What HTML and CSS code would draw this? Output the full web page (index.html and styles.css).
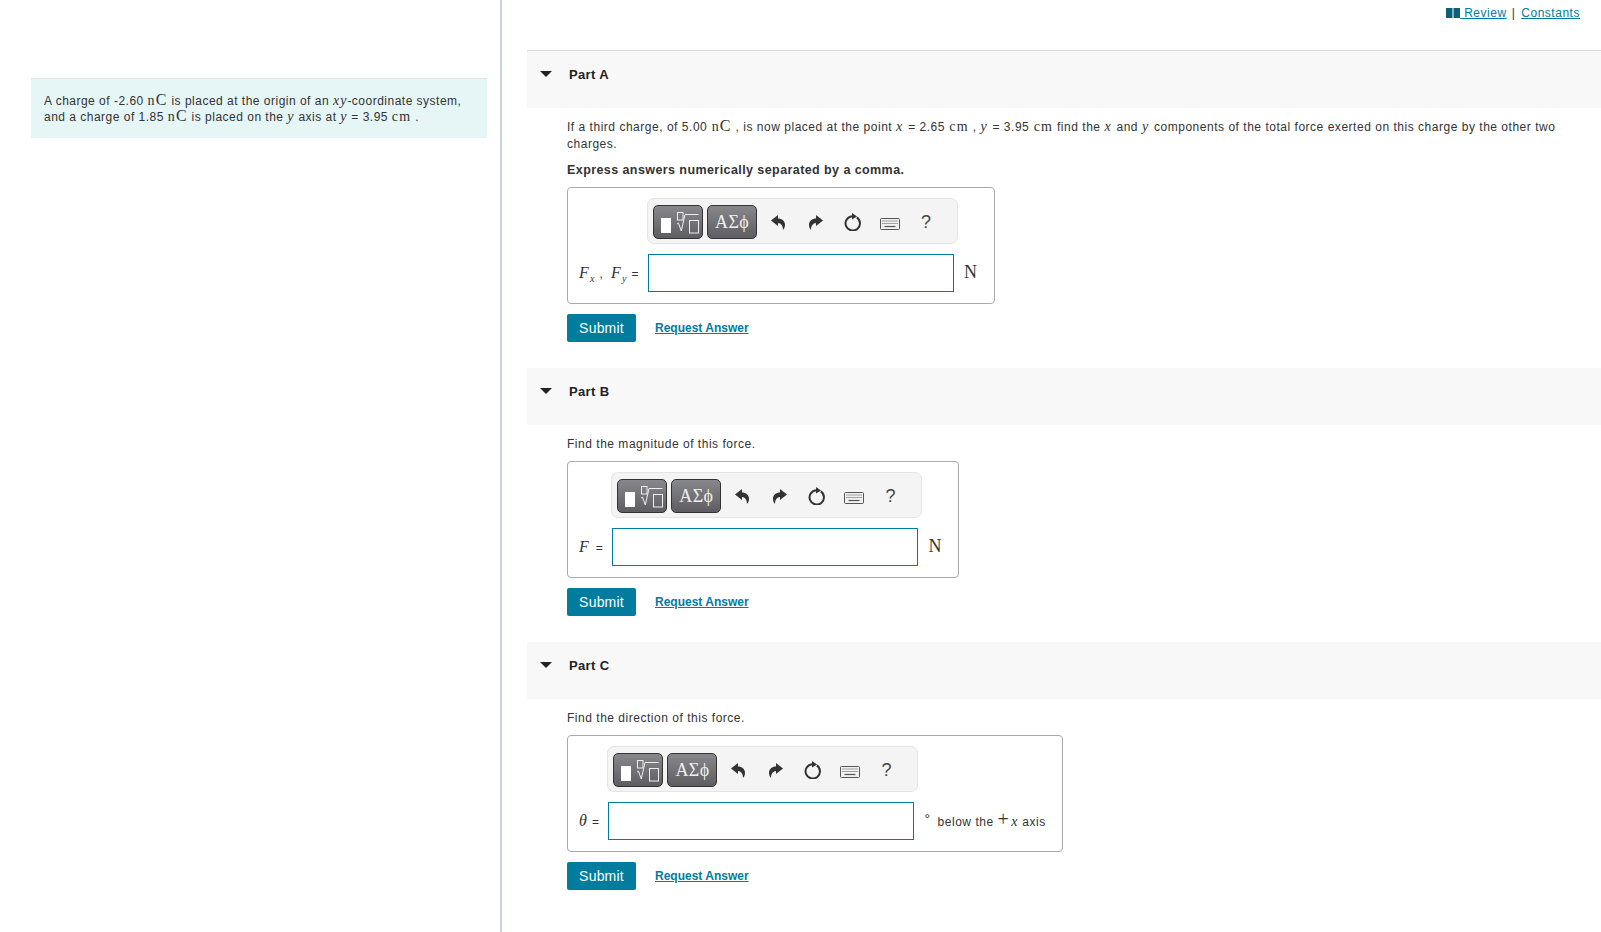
FILE: index.html
```html
<!DOCTYPE html>
<html lang="en">
<head>
<meta charset="utf-8">
<title>Part A</title>
<link rel="stylesheet" href="styles.css">
</head>
<body>
<svg class="defs" width="0" height="0" aria-hidden="true">
  <symbol id="i-template" viewBox="0 0 48 32">
    <rect x="7" y="12" width="10" height="15" fill="#fff"/>
    <rect x="23.500" y="6.500" width="5.500" height="7.500" fill="none" stroke="#eee" stroke-width="1"/>
    <path d="M23 18l1.500-.8L27.300 25 31 8.500H44.500" fill="none" stroke="#eee" stroke-width="1"/>
    <rect x="35.500" y="14.500" width="9" height="12.500" fill="none" stroke="#eee" stroke-width="1"/>
  </symbol>
  <symbol id="i-undo" viewBox="0 0 14 15">
    <path d="M0 5.500L7 0V3.500C11 3.500 14 6 14 10C14 12 13 14 12 15C12 11 10 8 7 8V11Z" fill="#333"/>
  </symbol>
  <symbol id="i-redo" viewBox="0 0 14 15">
    <path d="M14 5.500L7 0V3.500C3 3.500 0 6 0 10C0 12 1 14 2 15C2 11 4 8 7 8V11Z" fill="#333"/>
  </symbol>
  <symbol id="i-reset" viewBox="0 0 18 18">
    <path d="M12.800 4.400A7.200 7.200 0 1 1 8 3.200" fill="none" stroke="#333" stroke-width="2"/>
    <path d="M8 0L13 3.500L8 6.500Z" fill="#333"/>
  </symbol>
  <symbol id="i-keys" viewBox="0 0 20 12">
    <rect x=".5" y=".5" width="19" height="11" rx="1" fill="#f1f1f1" stroke="#555"/>
    <path d="M2.500 3H17.500M2.500 5.500H17.500" stroke="#555" stroke-width="1.200" stroke-dasharray="1 1"/>
    <path d="M4.500 8.500H15.500" stroke="#555" stroke-width="1.200"/>
  </symbol>
  <symbol id="i-book" viewBox="0 0 14 10">
    <path d="M0 0H6.500V10H0ZM7.500 0H14V10H7.500Z" fill="#0c6078"/>
  </symbol>
</svg>

<div class="page">
  <aside class="sidebar">
    <div class="intro">
      A charge of -2.60 <span class="unit">n<span class="big">C</span></span> is placed at the origin of an <i class="var">xy</i>-coordinate system,<br>
      and a charge of 1.85 <span class="unit">n<span class="big">C</span></span> is placed on the <i class="var">y</i> axis at <i class="var">y</i> = 3.95 <span class="unit">cm</span> .
    </div>
  </aside>

  <main class="content">
    <div class="toplinks">
      <svg class="book"><use href="#i-book"/></svg><a href="#" class="link">&nbsp;Review</a><span class="sep">|</span><a href="#" class="link">Constants</a>
    </div>

    <section class="part part-first">
      <header class="part-head"><span class="caret"></span><h2 class="part-title">Part A</h2></header>
      <div class="part-body">
        <p class="prompt">If a third charge, of 5.00 <span class="unit">n<span class="big">C</span></span> , is now placed at the point <i class="var">x</i> = 2.65 <span class="unit">cm</span> , <i class="var">y</i> = 3.95 <span class="unit">cm</span> find the <i class="var">x</i> and <i class="var">y</i> components of the total force exerted on this charge by the other two charges.</p>
        <p class="prompt prompt-strong">Express answers numerically separated by a comma.</p>
        <div class="answer">
          <div class="toolbar">
            <button class="tool-btn"><svg class="tmpl"><use href="#i-template"/></svg></button>
            <button class="tool-btn tool-greek">ΑΣϕ</button>
            <svg class="ic ic-undo"><use href="#i-undo"/></svg>
            <svg class="ic ic-redo"><use href="#i-redo"/></svg>
            <svg class="ic ic-reset"><use href="#i-reset"/></svg>
            <svg class="ic ic-keys"><use href="#i-keys"/></svg>
            <span class="ic-help">?</span>
          </div>
          <label class="ans-label"><i class="var">F<sub>x</sub></i> , &nbsp;<i class="var">F<sub>y</sub></i> =</label>
          <div class="ans-input"></div>
          <span class="ans-unit"><span class="unit-n">N</span></span>
        </div>
        <div class="actions"><button class="submit">Submit</button><a href="#" class="request">Request Answer</a></div>
      </div>
    </section>

    <section class="part">
      <header class="part-head"><span class="caret"></span><h2 class="part-title">Part B</h2></header>
      <div class="part-body">
        <p class="prompt">Find the magnitude of this force.</p>
        <div class="answer">
          <div class="toolbar">
            <button class="tool-btn"><svg class="tmpl"><use href="#i-template"/></svg></button>
            <button class="tool-btn tool-greek">ΑΣϕ</button>
            <svg class="ic ic-undo"><use href="#i-undo"/></svg>
            <svg class="ic ic-redo"><use href="#i-redo"/></svg>
            <svg class="ic ic-reset"><use href="#i-reset"/></svg>
            <svg class="ic ic-keys"><use href="#i-keys"/></svg>
            <span class="ic-help">?</span>
          </div>
          <label class="ans-label"><i class="var var-wide">F</i> =</label>
          <div class="ans-input"></div>
          <span class="ans-unit"><span class="unit-n">N</span></span>
        </div>
        <div class="actions"><button class="submit">Submit</button><a href="#" class="request">Request Answer</a></div>
      </div>
    </section>

    <section class="part">
      <header class="part-head"><span class="caret"></span><h2 class="part-title">Part C</h2></header>
      <div class="part-body">
        <p class="prompt">Find the direction of this force.</p>
        <div class="answer">
          <div class="toolbar">
            <button class="tool-btn"><svg class="tmpl"><use href="#i-template"/></svg></button>
            <button class="tool-btn tool-greek">ΑΣϕ</button>
            <svg class="ic ic-undo"><use href="#i-undo"/></svg>
            <svg class="ic ic-redo"><use href="#i-redo"/></svg>
            <svg class="ic ic-reset"><use href="#i-reset"/></svg>
            <svg class="ic ic-keys"><use href="#i-keys"/></svg>
            <span class="ic-help">?</span>
          </div>
          <label class="ans-label"><i class="var">θ</i> =</label>
          <div class="ans-input"></div>
          <span class="ans-unit"><span class="deg">°</span>below the <span class="plus">+</span><i class="var">x</i> axis</span>
        </div>
        <div class="actions"><button class="submit">Submit</button><a href="#" class="request">Request Answer</a></div>
      </div>
    </section>
  </main>
</div>
</body>
</html>
```
FILE: styles.css
```css
* { box-sizing: border-box; }
html, body { margin: 0; padding: 0; background: #fff; }
body {
  font-family: "Liberation Sans", Arial, sans-serif;
  font-size: 12px;
  letter-spacing: .52px;
  color: #333;
  overflow: hidden;
}
.defs { position: absolute; }

.page { display: flex; min-height: 932px; }

.sidebar {
  width: 502px;
  flex: none;
  padding: 78px 13px 0 31px;
  border-right: 2px solid #c3d5e6;
}
.intro {
  background: #e6f5f6;
  border-top: 1px solid #dbe8ea;
  padding: 14px 13px 13px;
  line-height: 16px;
  letter-spacing: .49px;
  white-space: nowrap;
}

.unit {
  font-family: "Liberation Serif", "DejaVu Serif", serif;
  font-size: 14px;
  letter-spacing: 1.200px;
  line-height: 0;
}
.big { font-size: 16px; }
.unit-n {
  font-family: "Liberation Serif", "DejaVu Serif", serif;
  font-size: 18px;
  line-height: 0;
}
.var {
  font-family: "Liberation Serif", "DejaVu Serif", serif;
  font-style: italic;
  font-size: 14px;
  letter-spacing: 1px;
  line-height: 0;
}
.var sub { font-size: 10px; line-height: 0; }
.ans-label .var { font-size: 16px; letter-spacing: 1.200px; }
.ans-label .var-wide { margin-right: 2px; }
.prompt .var { margin-right: 1px; }
.prompt .unit { margin-left: .5px; }

.content { flex: 1; min-width: 0; padding-left: 25px; }

.toplinks {
  height: 50px;
  display: flex;
  justify-content: flex-end;
  align-items: flex-start;
  padding: 5px 21px 0 0;
  line-height: 16px;
}
.book { width: 14px; height: 10px; margin-top: 3px; }
.link { color: #007c9e; text-decoration: underline; }
.sep { margin: 0 6px 0 5px; }

.part { margin-bottom: 26px; }
.part-head {
  height: 57px;
  background: #f8f8f8;
  display: flex;
  align-items: flex-start;
  padding: 16px 0 0 13px;
}
.part-first .part-head { height: 58px; border-top: 1px solid #ddd; }
.caret {
  width: 0;
  height: 0;
  margin-top: 4px;
  border-left: 6px solid transparent;
  border-right: 6px solid transparent;
  border-top: 6px solid #222;
}
.part-title {
  margin: 0 0 0 17px;
  font-size: 13px;
  line-height: 16px;
  font-weight: 700;
  letter-spacing: .35px;
  color: #222;
}

.part-body { padding: 11px 0 0 40px; }

.prompt { margin: 0 0 9px; line-height: 17px; padding-right: 45px; }
.prompt:last-of-type { margin-bottom: 8px; }
.prompt-strong { font-weight: 700; font-size: 12.500px; letter-spacing: .42px; }

.answer {
  display: inline-grid;
  grid-template-columns: auto 306px auto;
  grid-template-rows: 46px 38px;
  column-gap: 9px;
  row-gap: 10px;
  align-items: center;
  height: 117px;
  padding: 10px 16px 11px 11px;
  border: 1px solid #aaa;
  border-radius: 4px;
  vertical-align: top;
}
.toolbar {
  grid-column: 2 / 4;
  grid-row: 1;
  width: 311px;
  height: 46px;
  margin-left: -1px;
  display: flex;
  align-items: center;
  padding: 2px 0 0 5px;
  background: #f4f4f4;
  border: 1px solid #e4e4e4;
  border-radius: 7px;
}
.tool-btn {
  width: 50px;
  height: 34px;
  margin: 0 4px 0 0;
  padding: 0;
  display: flex;
  align-items: center;
  justify-content: center;
  border: 1px solid #333;
  border-radius: 5px;
  background: linear-gradient(#88888c, #5e5e62);
}
.tmpl { width: 48px; height: 32px; display: block; }
.tool-greek {
  font-family: "Liberation Serif", "DejaVu Serif", serif;
  font-size: 18px;
  letter-spacing: .4px;
  color: #eee;
}
.ic { display: block; flex: none; }
.ic-undo { width: 14px; height: 15px; margin-left: 10px; }
.ic-redo { width: 14px; height: 15px; margin-left: 24px; }
.ic-reset { width: 18px; height: 18px; margin-left: 21px; }
.ic-keys { width: 20px; height: 12px; margin-left: 18px; margin-top: 4px; }
.ic-help { font-size: 18px; letter-spacing: 0; margin-left: 21px; color: #444; }

.ans-label { grid-column: 1; grid-row: 2; white-space: nowrap; padding-top: 1px; }
.ans-input {
  grid-column: 2;
  grid-row: 2;
  height: 38px;
  border: 1px solid #007c9e;
  background: #fff;
}
.ans-unit { grid-column: 3; grid-row: 2; padding: 2px 0 0 1px; white-space: nowrap; }
.deg { font-size: 14px; margin-right: 7px; vertical-align: 2px; line-height: 0; }
.plus { font-family: "Liberation Serif", serif; font-size: 20px; line-height: 0; margin-right: 2px; }

.actions { display: flex; align-items: center; margin-top: 10px; }
.submit {
  width: 69px;
  height: 28px;
  padding: 0;
  background: #007c9e;
  color: #fff;
  border: 0;
  border-radius: 2px;
  font-family: "Liberation Sans", Arial, sans-serif;
  font-size: 14px;
  letter-spacing: .2px;
}
.request {
  margin-left: 19px;
  color: #007c9e;
  font-weight: 700;
  font-size: 12px;
  letter-spacing: 0;
}
```
